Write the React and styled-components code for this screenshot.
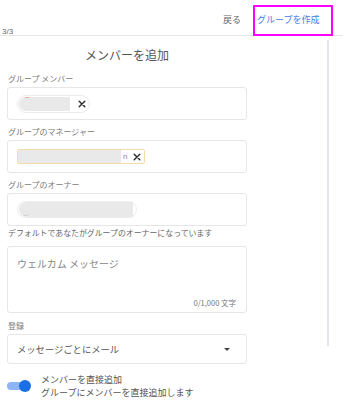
import React from "react";
import styled, { createGlobalStyle, css } from "styled-components";

const Global = createGlobalStyle`
  html, body { margin: 0; padding: 0; background: #fff; }
  body { font-family: "Noto Sans CJK JP", "Noto Sans", sans-serif; }
`;

const Page = styled.div`
  width: 343px;
  height: 400px;
  overflow: hidden;
  background: #fff;
`;

const Header = styled.header`
  display: flex;
  align-items: stretch;
  height: 35px;
  border-bottom: 1px solid #e6e6e6;
`;

const Step = styled.div`
  align-self: flex-end;
  margin-left: 2px;
  margin-bottom: -1px;
  font-size: 8px;
  line-height: 8px;
  color: #666;
  font-family: "Liberation Sans", sans-serif;
`;

const Actions = styled.div`
  margin-left: auto;
  margin-right: 10px;
  display: flex;
  align-items: flex-start;
  gap: 12px;
`;

const TextButton = styled.div`
  font-size: 9px;
  line-height: 12px;
  color: ${(p) => (p.$primary ? "#3f7de6" : "#666")};
  ${(p) =>
    p.$primary
      ? css`
          box-sizing: border-box;
          width: 80px;
          height: 31px;
          margin-top: 5px;
          border: 2px solid #ff00ff;
          padding: 7px 0 0 2px;
          position: relative;
          z-index: 1;
        `
      : css`
          margin-top: 14px;
        `}
`;

const Main = styled.main`
  display: flex;
`;

const Form = styled.div`
  width: 254px;
  box-sizing: border-box;
  padding: 0 7px;
  display: flex;
  flex-direction: column;
`;

const Divider = styled.div`
  margin-left: auto;
  margin-right: 14px;
  margin-top: 4px;
  width: 2px;
  height: 306px;
  background: #e4e4ea;
`;

const Title = styled.h2`
  margin: 9px 0 0;
  text-align: center;
  font-size: 12px;
  line-height: 20px;
  font-weight: 400;
  color: #555;
`;

const Label = styled.div`
  margin-top: ${(p) => p.$top}px;
  margin-left: 1px;
  font-size: 8px;
  line-height: 12px;
  color: #7a7a7a;
`;

const Field = styled.div`
  box-sizing: border-box;
  margin-top: 2px;
  height: ${(p) => p.$h || 33}px;
  border: 1px solid #e6e6e6;
  border-radius: 3px;
  display: flex;
  align-items: center;
  padding: 0 9px;
`;

const Chip = styled.div`
  box-sizing: border-box;
  display: flex;
  align-items: center;
  width: ${(p) => p.$w}px;
  height: ${(p) => p.$h}px;
  border: 1px solid ${(p) => (p.$warn ? "#f4dca8" : "#ececec")};
  border-radius: ${(p) => (p.$pill ? "999px" : "2px")};
  padding-left: ${(p) => (p.$pill ? 1 : 0)}px;
`;

const Redacted = styled.div`
  position: relative;
  width: ${(p) => p.$w}px;
  height: ${(p) => p.$h}px;
  background: #e9e9e9;
  border-radius: ${(p) => (p.$round ? "8px 0 0 8px" : "0")};
  ${(p) =>
    p.$mark === "top" &&
    css`
      &::before {
        content: "";
        position: absolute;
        left: 6px;
        top: 0;
        width: 4px;
        height: 1px;
        background: #f2b08a;
      }
    `}
  ${(p) =>
    p.$mark === "bottom" &&
    css`
      &::before {
        content: "";
        position: absolute;
        left: 4px;
        bottom: 1px;
        width: 6px;
        height: 3px;
        border-radius: 0 0 4px 4px;
        border-bottom: 1px solid #cfcfcf;
      }
    `}
`;

const ChipText = styled.span`
  margin-left: 2px;
  font-size: 8px;
  line-height: 10px;
  color: #888;
  font-family: "Liberation Sans", sans-serif;
`;

const CloseIcon = styled.svg`
  width: 8px;
  height: 8px;
  margin-left: ${(p) => p.$ml}px;
  flex: none;
`;

const Close = ({ ml }) => (
  <CloseIcon $ml={ml} viewBox="0 0 8 8">
    <path d="M1.2 1.2L6.8 6.8M6.8 1.2L1.2 6.8" stroke="#2a2a2a" strokeWidth="1.4" strokeLinecap="round" />
  </CloseIcon>
);

const Helper = styled.div`
  margin-top: 1px;
  margin-left: 1px;
  font-size: 7.9px;
  line-height: 12px;
  color: #666;
`;

const TextArea = styled.div`
  box-sizing: border-box;
  margin-top: 7px;
  height: 67px;
  border: 1px solid #e6e6e6;
  border-radius: 3px;
  padding: 10px 10px 4px 9px;
  display: flex;
  flex-direction: column;
`;

const Placeholder = styled.div`
  font-size: 10px;
  line-height: 14px;
  color: #888;
`;

const Counter = styled.div`
  margin-top: auto;
  align-self: flex-end;
  font-size: 7.5px;
  line-height: 10px;
  color: #777;
`;

const Select = styled(Field)`
  height: 30px;
  justify-content: space-between;
  padding: 0 16px 0 9px;
`;

const SelectText = styled.span`
  font-size: 9.3px;
  line-height: 14px;
  color: #555;
`;

const Caret = styled.span`
  width: 0;
  height: 0;
  border-left: 3px solid transparent;
  border-right: 3px solid transparent;
  border-top: 3px solid #444;
`;

const ToggleRow = styled.div`
  margin-top: 9px;
  display: flex;
  align-items: center;
`;

const Toggle = styled.div`
  position: relative;
  width: 24px;
  height: 12px;
  flex: none;
  display: flex;
  align-items: center;
`;

const Track = styled.div`
  width: 21px;
  height: 8px;
  border-radius: 4px;
  background: #8db4f5;
`;

const Thumb = styled.div`
  position: absolute;
  right: 0;
  top: 0;
  width: 12px;
  height: 12px;
  border-radius: 50%;
  background: #1a6fe6;
`;

const ToggleText = styled.div`
  margin-left: 10px;
  font-size: 9px;
  line-height: 13px;
  color: #555;
`;

export default function App() {
  return (
    <Page>
      <Global />
      <Header>
        <Step>3/3</Step>
        <Actions>
          <TextButton>戻る</TextButton>
          <TextButton $primary>グループを作成</TextButton>
        </Actions>
      </Header>
      <Main>
        <Form>
          <Title>メンバーを追加</Title>

          <Label $top={8}>グループ メンバー</Label>
          <Field>
            <Chip $pill $w={73} $h={18}>
              <Redacted $round $w={51} $h={14} $mark="top" />
              <Close ml={8} />
            </Chip>
          </Field>

          <Label $top={6}>グループのマネージャー</Label>
          <Field>
            <Chip $warn $w={128} $h={15}>
              <Redacted $w={103} $h={13} />
              <ChipText>n</ChipText>
              <Close ml={6} />
            </Chip>
          </Field>

          <Label $top={6}>グループのオーナー</Label>
          <Field>
            <Chip $pill $w={120} $h={17}>
              <Redacted $round $w={114} $h={15} $mark="bottom" />
            </Chip>
          </Field>
          <Helper>デフォルトであなたがグループのオーナーになっています</Helper>

          <TextArea>
            <Placeholder>ウェルカム メッセージ</Placeholder>
            <Counter>0/1,000 文字</Counter>
          </TextArea>

          <Label $top={7}>登録</Label>
          <Select>
            <SelectText>メッセージごとにメール</SelectText>
            <Caret />
          </Select>

          <ToggleRow>
            <Toggle>
              <Track />
              <Thumb />
            </Toggle>
            <ToggleText>
              メンバーを直接追加
              <br />
              グループにメンバーを直接追加します
            </ToggleText>
          </ToggleRow>
        </Form>
        <Divider />
      </Main>
    </Page>
  );
}
